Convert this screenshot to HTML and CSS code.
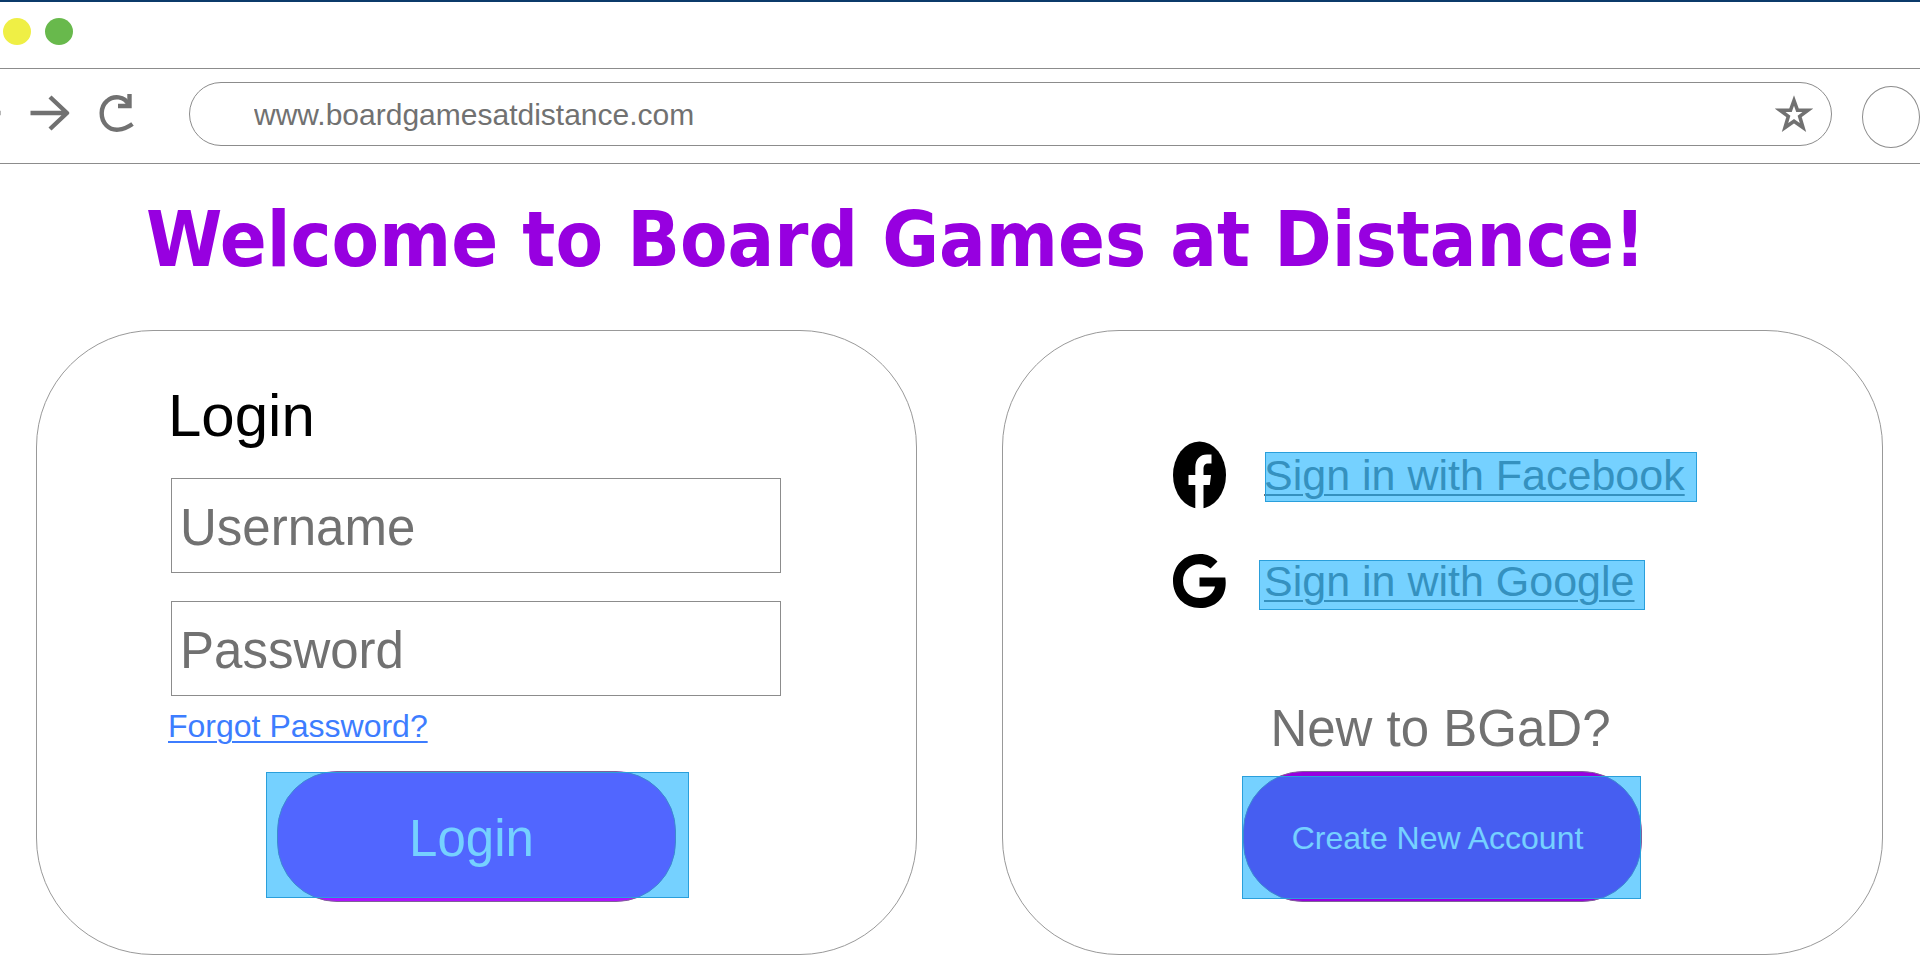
FILE: index.html
```html
<!DOCTYPE html>
<html lang="en">
<head>
<meta charset="utf-8">
<title>Board Games at Distance</title>
<link rel="stylesheet" href="styles.css">
</head>
<body>
<header class="browser">
  <div class="window-bar">
    <span class="dot dot-yellow"></span>
    <span class="dot dot-green"></span>
  </div>
  <div class="toolbar">
    <div class="nav">
      <button class="nav-button" type="button" aria-label="Forward">
        <svg width="70" height="40" viewBox="0 0 70 40" fill="none" stroke="#717171" stroke-width="4.400"><path d="M-4 19H0.500M30.500 19H67M50 3L67 19L50 35" stroke-linejoin="round"/></svg>
      </button>
      <button class="nav-button" type="button" aria-label="Reload">
        <svg width="36" height="40" viewBox="0 0 36 40" fill="none" stroke="#717171" stroke-width="4.400"><path d="M33.500 30C24 36.500 14 38 7.500 31.500C1 25 1 13 8 7C14 1.500 26 1.500 29.500 11"/><path d="M30.500 0V12H19" stroke-width="4.400"/></svg>
      </button>
    </div>
    <div class="address">
      <input class="address-input" type="text" aria-label="Address" value="www.boardgamesatdistance.com">
      <button class="nav-button" type="button" aria-label="Bookmark">
        <svg width="38" height="38" viewBox="0 0 38 38"><path d="M19 5.500L22.500 15.300H32.800L24.700 21.400L28 32.500L19 26.300L10 32.500L13.300 21.400L5.200 15.300H15.500Z" fill="none" stroke="#717171" stroke-width="3.600"/></svg>
      </button>
    </div>
    <button class="profile" type="button" aria-label="Profile"></button>
  </div>
</header>
<main>
  <h1 class="title">Welcome to Board Games at Distance!</h1>
  <div class="cards">
    <form class="card login">
      <h2 class="heading">Login</h2>
      <input class="field" type="text" placeholder="Username" aria-label="Username">
      <input class="field" type="password" placeholder="Password" aria-label="Password">
      <a class="forgot" href="#">Forgot Password?</a>
      <button class="pill pill-login" type="submit">Login</button>
    </form>
    <section class="card signup">
      <div class="provider provider-facebook">
        <svg width="53" height="68" viewBox="0 0 53 68"><ellipse cx="26.500" cy="34" rx="26.500" ry="33.500"/><path d="M22.300 69V44H15.500V34H22.300V27C22.300 18 27 13.500 34 13.500H38.500V22.500H35C31.500 22.500 30.500 25 30.500 28V34H38L36.800 44H30.500V69Z" fill="#fff"/></svg>
        <a class="provider-link link-facebook" href="#">Sign in with Facebook</a>
      </div>
      <div class="provider">
        <svg width="53" height="54" viewBox="0 0 53 54"><path d="M44.500 7.500L37.500 14.500C25 5 10 13 10 27C10 38 18 44 27 44C35 44 40.500 39.500 42 32.500H26.500V23.500H52.300C55 42 44 54 27 54C11 54 0 42 0 27C0 12 11 0 27 0C34 0 40 2.500 44.500 7.500Z"/></svg>
        <a class="provider-link link-google" href="#">Sign in with Google</a>
      </div>
      <p class="new">New to BGaD?</p>
      <button class="pill pill-create" type="button">Create New Account</button>
    </section>
  </div>
</main>
</body>
</html>
```
FILE: styles.css
```css
* { box-sizing: border-box; }

body {
  margin: 0;
  background: #fff;
  color: #717171;
  font-family: "Liberation Sans", Arial, sans-serif;
  overflow-x: hidden;
}

button, input { font: inherit; color: inherit; }

.browser { border-top: 2px solid #0b3a6a; }

.window-bar {
  display: flex;
  gap: 14px;
  height: 67px;
  padding: 16px 3px 0;
  border-bottom: 1px solid #8c8c8c;
}

.dot { width: 28px; height: 27px; border-radius: 50%; }
.dot-yellow { background: #efef45; }
.dot-green { background: #68b94c; }

.toolbar {
  display: flex;
  align-items: center;
  height: 95px;
  padding-bottom: 4px;
  border-bottom: 1px solid #8c8c8c;
}

.nav { display: flex; gap: 29px; width: 189px; }

.nav-button {
  display: flex;
  padding: 0;
  border: 0;
  background: none;
}

.address {
  flex: 1;
  display: flex;
  align-items: center;
  height: 64px;
  padding: 0 18px 0 62px;
  border: 1px solid #8c8c8c;
  border-radius: 32px;
}

.address-input {
  flex: 1;
  padding: 4px 2px 2px;
  border: 0;
  outline: 0;
  background: none;
  font-size: 30px;
}

.profile {
  width: 58px;
  height: 62px;
  margin: 6px 0 0 30px;
  border: 1px solid #8c8c8c;
  border-radius: 50%;
  background: none;
}

.title {
  margin: 0;
  padding: 31px 0 0 146px;
  color: #9700e0;
  font-family: "DejaVu Sans Condensed", "DejaVu Sans", sans-serif;
  font-size: 77px;
  font-weight: 700;
  line-height: 90px;
  white-space: nowrap;
}

.cards {
  display: grid;
  grid-template-columns: repeat(2, minmax(0, 1fr));
  gap: 85px;
  padding: 45px 37px 5px 36px;
}

.card {
  display: flex;
  flex-direction: column;
  border: 1px solid #999;
  border-radius: 117px;
}

.login { padding: 55px 135px 52px 131px; }

.heading {
  margin: 0 0 32px;
  color: #000;
  font-size: 60px;
  font-weight: 400;
  line-height: 60px;
}

.field {
  height: 95px;
  margin: 0 0 28px 3px;
  padding: 3px 8px 0;
  border: 1px solid #8c8c8c;
  background: #fff;
  font-size: 51px;
}

.field::placeholder { color: #717171; opacity: 1; }

.forgot {
  align-self: flex-start;
  margin-top: -14px;
  color: #3d7dff;
  font-size: 32px;
  line-height: 32px;
  text-decoration-thickness: 2px;
  text-underline-offset: 4px;
}

.pill {
  position: relative;
  align-self: center;
  width: 399px;
  height: 131px;
  padding: 3px 10px 0 0;
  border: 1px solid #80609a;
  border-radius: 60px;
  color: #fff;
}

.pill-login { margin: 29px 0 0 4px; background: #af12ff; font-size: 51px; }
.pill-create { background: #9700e0; font-size: 32px; }

/* Translucent highlight over the clickable areas */
.pill::after,
.provider-link::after {
  content: "";
  position: absolute;
  border: 1px solid #2a9fdb;
  background: rgba(4, 171, 255, 0.55);
}

.pill-login::after { inset: 0 -14px 3px -12px; }
.pill-create::after { inset: 4px 0 2px -2px; }

.signup { padding: 110px 0 51px; }

.provider { display: flex; align-items: center; gap: 38px; padding-left: 170px; }
.provider-facebook { margin-bottom: 45px; }

.provider-link {
  position: relative;
  color: #717171;
  font-size: 43px;
  line-height: 48px;
  text-decoration-thickness: 2px;
  text-underline-offset: 4px;
}

.link-facebook::after { inset: 1px -12px -3px 1px; }
.link-google::after { inset: 3px -10px -5px -5px; }

.new {
  align-self: center;
  margin: 95px 4px 16px 0;
  font-size: 51px;
  line-height: 52px;
}
```
